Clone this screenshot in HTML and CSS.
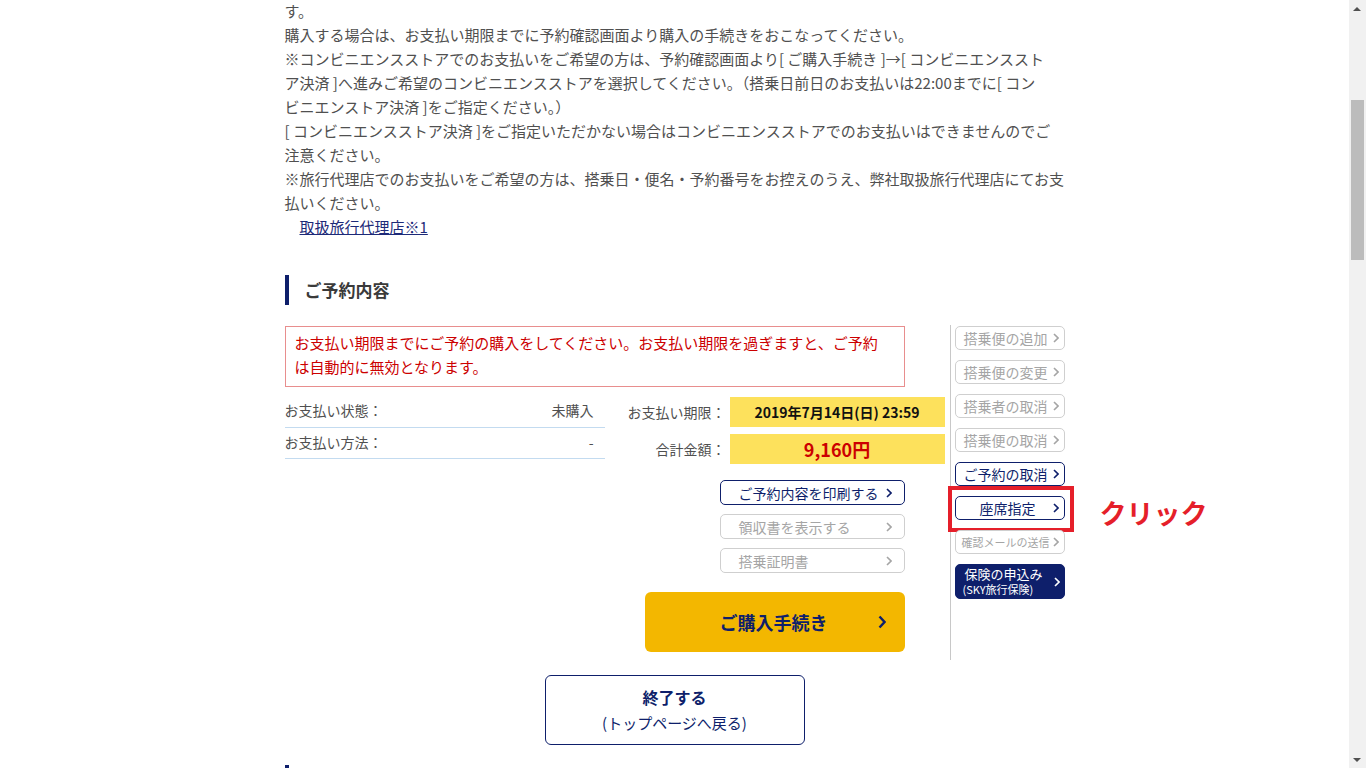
FILE: index.html
```html
<!DOCTYPE html>
<html lang="ja">
<head>
<meta charset="utf-8">
<title>ご予約内容の確認</title>
<link rel="stylesheet" href="styles.css">
</head>
<body>
<div class="page">
  <main class="content">
    <section class="guide">
      <p>す。</p>
      <p>購入する場合は、お支払い期限までに予約確認画面より購入の手続きをおこなってください。</p>
      <p>※コンビニエンスストアでのお支払いをご希望の方は、予約確認画面より[ ご購入手続き ]→[ コンビニエンススト<br>ア決済 ]へ進みご希望のコンビニエンスストアを選択してください。（搭乗日前日のお支払いは22:00までに[ コン<br>ビニエンストア決済 ]をご指定ください。）</p>
      <p>[ コンビニエンスストア決済 ]をご指定いただかない場合はコンビニエンスストアでのお支払いはできませんのでご<br>注意ください。</p>
      <p>※旅行代理店でのお支払いをご希望の方は、搭乗日・便名・予約番号をお控えのうえ、弊社取扱旅行代理店にてお支<br>払いください。</p>
      <p class="agent-link"><a href="#">取扱旅行代理店※1</a></p>
    </section>

    <section class="reservation">
      <h2 class="section-title">ご予約内容</h2>

      <div class="reservation-body">
        <div class="reservation-main">
          <div class="notice">お支払い期限までにご予約の購入をしてください。お支払い期限を過ぎますと、ご予約は自動的に無効となります。</div>

          <div class="summary">
            <dl class="status">
              <div class="status-row"><dt>お支払い状態：</dt><dd>未購入</dd></div>
              <div class="status-row"><dt>お支払い方法：</dt><dd>-</dd></div>
            </dl>
            <div class="payment">
              <div class="payment-row">
                <span class="payment-label">お支払い期限：</span>
                <span class="payment-value">2019年7月14日(日) 23:59</span>
              </div>
              <div class="payment-row">
                <span class="payment-label">合計金額：</span>
                <span class="payment-value price">9,160円</span>
              </div>
            </div>
          </div>

          <div class="actions">
            <a href="#" class="btn btn-active">ご予約内容を印刷する<svg class="chev" viewBox="0 0 6 10"><polyline points="1,1 5,5 1,9"/></svg></a>
            <a href="#" class="btn btn-disabled">領収書を表示する<svg class="chev" viewBox="0 0 6 10"><polyline points="1,1 5,5 1,9"/></svg></a>
            <a href="#" class="btn btn-disabled">搭乗証明書<svg class="chev" viewBox="0 0 6 10"><polyline points="1,1 5,5 1,9"/></svg></a>
          </div>

          <a href="#" class="btn-purchase">ご購入手続き<svg class="chev-lg" viewBox="0 0 8 14"><polyline points="1.5,1.5 6.5,7 1.5,12.5"/></svg></a>
        </div>

        <aside class="side-menu">
          <a href="#" class="side-btn">搭乗便の追加<svg class="chev" viewBox="0 0 6 10"><polyline points="1,1 5,5 1,9"/></svg></a>
          <a href="#" class="side-btn">搭乗便の変更<svg class="chev" viewBox="0 0 6 10"><polyline points="1,1 5,5 1,9"/></svg></a>
          <a href="#" class="side-btn">搭乗者の取消<svg class="chev" viewBox="0 0 6 10"><polyline points="1,1 5,5 1,9"/></svg></a>
          <a href="#" class="side-btn">搭乗便の取消<svg class="chev" viewBox="0 0 6 10"><polyline points="1,1 5,5 1,9"/></svg></a>
          <a href="#" class="side-btn side-active">ご予約の取消<svg class="chev" viewBox="0 0 6 10"><polyline points="1,1 5,5 1,9"/></svg></a>
          <a href="#" class="side-btn side-active side-seat">座席指定<svg class="chev" viewBox="0 0 6 10"><polyline points="1,1 5,5 1,9"/></svg>
            <span class="highlight"></span>
            <span class="callout">クリック</span>
          </a>
          <a href="#" class="side-btn side-small">確認メールの送信<svg class="chev" viewBox="0 0 6 10"><polyline points="1,1 5,5 1,9"/></svg></a>
          <a href="#" class="side-btn side-insurance"><span class="ins-text"><span class="ins-main">保険の申込み</span><span class="ins-sub">(SKY旅行保険)</span></span><svg class="chev" viewBox="0 0 6 10"><polyline points="1,1 5,5 1,9"/></svg></a>
        </aside>
      </div>

      <div class="finish">
        <a href="#" class="btn-finish"><strong>終了する</strong><span>(トップページへ戻る)</span></a>
      </div>
    </section>

    <section class="reservation">
      <h2 class="section-title next-title"></h2>
    </section>
  </main>

  <div class="scrollbar">
    <span class="arrow arrow-up"></span>
    <span class="thumb"></span>
    <span class="arrow arrow-down"></span>
  </div>
</div>
</body>
</html>
```

FILE: styles.css
```css
* {
  box-sizing: border-box;
}

html, body {
  margin: 0;
  padding: 0;
  height: 100%;
  overflow: hidden;
  background: #fff;
}

body {
  font-family: "Noto Sans CJK JP", "Noto Sans", sans-serif;
  color: #505050;
  font-size: 15px;
  line-height: 24px;
}

.page {
  padding-right: 17px;
}

.content {
  width: 780px;
  margin: -1px auto 0;
}

/* guidance text */
.guide p {
  margin: 0;
}

.agent-link {
  padding-left: 15px;
}

.agent-link a {
  color: #1d2a78;
  text-decoration: underline;
}

/* section heading */
.section-title {
  margin: 36px 0 0;
  height: 30px;
  line-height: 30px;
  border-left: 4px solid #0e1f6b;
  padding-left: 16px;
  font-size: 17px;
  font-weight: bold;
  color: #3a3a3a;
}

.reservation + .reservation .section-title {
  margin-top: 20px;
}

.reservation-body {
  display: flex;
  margin-top: 20px;
}

.reservation-main {
  width: 660px;
  padding: 1px 0 8px;
  display: flex;
  flex-direction: column;
}

.notice {
  width: 620px;
  border: 1px solid #e88e8e;
  padding: 4px 20px 7px 9px;
  color: #cc0000;
}

/* summary */
.summary {
  display: flex;
  margin-top: 9px;
}

.status {
  width: 320px;
  margin: 0;
  font-size: 14px;
}

.status-row {
  display: flex;
  justify-content: space-between;
  align-items: center;
  height: 32px;
  padding: 0 11px 3px 0;
  border-bottom: 1px solid #c3dbf0;
}

.status-row + .status-row {
  height: 31px;
}

.status dt,
.status dd {
  margin: 0;
}

.payment {
  flex: 1;
  display: flex;
  flex-direction: column;
  gap: 7px;
  padding-top: 1px;
}

.payment-row {
  display: flex;
  align-items: center;
  height: 30px;
}

.payment-label {
  flex: 1;
  text-align: right;
  font-size: 14px;
  padding-right: 4px;
}

.payment-value {
  width: 215px;
  height: 30px;
  background: #fde15c;
  display: flex;
  align-items: center;
  justify-content: center;
  font-size: 14px;
  font-weight: bold;
  color: #111;
}

.payment-value.price {
  font-size: 18px;
  color: #cc0000;
}

/* outlined buttons */
.actions {
  width: 620px;
  margin-top: 16px;
  display: flex;
  flex-direction: column;
  align-items: flex-end;
  gap: 9px;
}

.btn {
  width: 185px;
  height: 25px;
  border-radius: 5px;
  display: flex;
  align-items: center;
  justify-content: space-between;
  padding: 0 12px 0 18px;
  font-size: 14px;
  text-decoration: none;
  background: #fff;
}

.btn-active {
  border: 1px solid #0e1f6b;
  color: #0e1f6b;
}

.btn-disabled {
  border: 1px solid #cfcfcf;
  color: #a5a5a5;
}

.chev {
  width: 6px;
  height: 10px;
  flex: none;
  fill: none;
  stroke: currentColor;
  stroke-width: 1.6;
}

.btn-purchase {
  align-self: flex-start;
  margin: 19px 0 0 360px;
  width: 260px;
  height: 60px;
  border-radius: 6px;
  background: #f3b700;
  color: #0e1f6b;
  font-size: 18px;
  font-weight: bold;
  text-decoration: none;
  display: flex;
  align-items: center;
  justify-content: space-between;
  padding: 0 19px 0 75px;
}

.chev-lg {
  width: 8px;
  height: 14px;
  fill: none;
  stroke: currentColor;
  stroke-width: 2.4;
}

/* side menu */
.side-menu {
  margin-left: 5px;
  border-left: 1px solid #c8c8c8;
  padding: 1px 0 0 4px;
  display: flex;
  flex-direction: column;
  gap: 10px;
}

.side-btn {
  position: relative;
  width: 110px;
  height: 24px;
  border: 1px solid #cfcfcf;
  border-radius: 5px;
  display: flex;
  align-items: center;
  justify-content: space-between;
  padding: 0 5px 0 8px;
  font-size: 14px;
  color: #a5a5a5;
  text-decoration: none;
  background: #fff;
}

.side-active {
  border-color: #0e1f6b;
  color: #0e1f6b;
}

.side-seat {
  padding-left: 24px;
}

.side-small {
  font-size: 11px;
  padding-left: 6px;
}

.side-insurance {
  height: 35px;
  background: #0e1f6b;
  border-color: #0e1f6b;
  color: #fff;
  padding: 0 4px 0 7px;
}

.ins-text {
  display: flex;
  flex-direction: column;
}

.ins-main {
  font-size: 13px;
  line-height: 16px;
  padding-left: 2px;
}

.ins-sub {
  font-size: 11px;
  line-height: 15px;
}

/* red marker around the seat button */
.highlight {
  position: absolute;
  left: -8px;
  top: -11px;
  width: 126px;
  height: 46px;
  border: 4px solid #e51f2a;
}

.callout {
  position: absolute;
  left: 144px;
  top: 1px;
  white-space: nowrap;
  font-size: 27px;
  line-height: 30px;
  font-weight: bold;
  color: #e51f2a;
}

/* finish */
.finish {
  display: flex;
  justify-content: center;
  margin-top: 15px;
}

.btn-finish {
  width: 260px;
  height: 70px;
  border: 1px solid #0e1f6b;
  border-radius: 6px;
  display: flex;
  flex-direction: column;
  align-items: center;
  padding-top: 9px;
  color: #0e1f6b;
  text-decoration: none;
  line-height: 25px;
}

.btn-finish strong {
  font-size: 16px;
}

.btn-finish span {
  font-size: 15px;
}

/* window scrollbar */
.scrollbar {
  position: fixed;
  top: 0;
  right: 0;
  width: 17px;
  height: 100%;
  background: #f1f1f1;
}

.thumb {
  position: absolute;
  left: 2px;
  top: 100px;
  width: 13px;
  height: 160px;
  background: #bcbcbc;
}

.arrow {
  position: absolute;
  left: 4px;
  width: 0;
  height: 0;
  border-left: 4px solid transparent;
  border-right: 4px solid transparent;
}

.arrow-up {
  top: 7px;
  border-bottom: 4px solid #505050;
}

.arrow-down {
  bottom: 6px;
  border-top: 4px solid #505050;
}
```
